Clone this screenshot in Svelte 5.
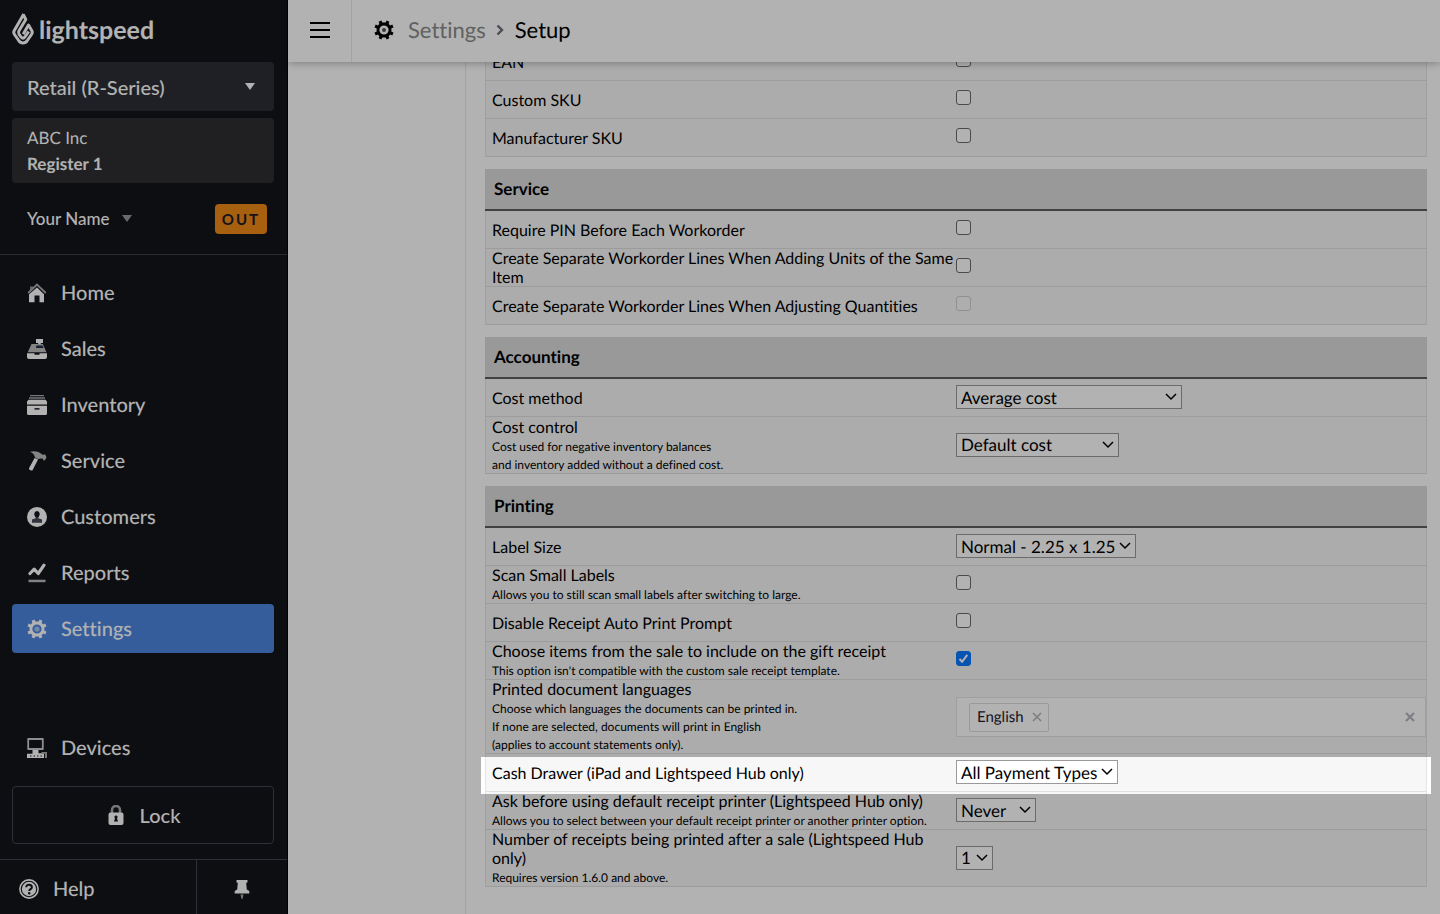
<script>
  const nav = ['Home', 'Sales', 'Inventory', 'Service', 'Customers', 'Reports', 'Settings'];

  const sections = [
    {
      title: '',
      rows: [
        { id: 'ean', label: 'EAN', type: 'check' },
        { id: 'custom-sku', label: 'Custom SKU', type: 'check' },
        { id: 'manufacturer-sku', label: 'Manufacturer SKU', type: 'check' }
      ]
    },
    {
      title: 'Service',
      rows: [
        { id: 'require-pin', label: 'Require PIN Before Each Workorder', type: 'check' },
        { id: 'lines-units', label: 'Create Separate Workorder Lines When Adding Units of the Same Item', type: 'check' },
        { id: 'lines-quantities', label: 'Create Separate Workorder Lines When Adjusting Quantities', type: 'check', disabled: true }
      ]
    },
    {
      title: 'Accounting',
      rows: [
        { id: 'cost-method', label: 'Cost method', type: 'select', value: 'Average cost', width: 226 },
        {
          id: 'cost-control',
          label: 'Cost control',
          notes: ['Cost used for negative inventory balances', 'and inventory added without a defined cost.'],
          type: 'select',
          value: 'Default cost',
          width: 163,
          tall: true
        }
      ]
    },
    {
      title: 'Printing',
      rows: [
        { id: 'label-size', label: 'Label Size', type: 'select', value: 'Normal - 2.25 x 1.25', width: 180 },
        { id: 'scan-small', label: 'Scan Small Labels', notes: ['Allows you to still scan small labels after switching to large.'], type: 'check' },
        { id: 'disable-prompt', label: 'Disable Receipt Auto Print Prompt', type: 'check' },
        {
          id: 'gift-receipt',
          label: 'Choose items from the sale to include on the gift receipt',
          notes: ["This option isn't compatible with the custom sale receipt template."],
          type: 'check',
          checked: true
        },
        {
          id: 'languages',
          label: 'Printed document languages',
          notes: [
            'Choose which languages the documents can be printed in.',
            'If none are selected, documents will print in English',
            '(applies to account statements only).'
          ],
          type: 'tags',
          value: 'English'
        },
        { id: 'cash-drawer', label: 'Cash Drawer (iPad and Lightspeed Hub only)', type: 'select', value: 'All Payment Types', width: 162, spotlight: true },
        {
          id: 'ask-printer',
          label: 'Ask before using default receipt printer (Lightspeed Hub only)',
          notes: ['Allows you to select between your default receipt printer or another printer option.'],
          type: 'select',
          value: 'Never',
          width: 80
        },
        {
          id: 'receipt-count',
          label: 'Number of receipts being printed after a sale (Lightspeed Hub only)',
          notes: ['Requires version 1.6.0 and above.'],
          type: 'select',
          value: '1',
          width: 37
        }
      ]
    }
  ];
</script>

{#snippet gear()}
  <path
    fill="currentColor"
    fill-rule="evenodd"
    d="M8.3 2.6 7.4.5 4.6 1.7l.8 2.1-1.6 1.6-2.1-.8L.5 7.4l2.1.9v3.4l-2.1.9 1.2 2.8 2.1-.8 1.6 1.6-.8 2.1 2.8 1.2.9-2.1h3.4l.9 2.1 2.8-1.2-.8-2.1 1.6-1.6 2.1.8 1.2-2.8-2.1-.9V8.3l2.1-.9-1.2-2.8-2.1.8-1.6-1.6.8-2.1L12.6.5l-.9 2.1zM10 5.400a4.600 4.600 0 1 0 0 9.200a4.600 4.600 0 1 0 0-9.200z"
  />
{/snippet}

{#snippet icon(name)}
  <svg class="icon" viewBox="0 0 20 20" aria-hidden="true">
    {#if name === 'Home'}
      <path d="M3 3.500h3v2L3 8z" fill="#999" />
      <path d="M1.200 10 10 1.500l8.800 8.500" fill="none" stroke="#aaa" stroke-width="1.800" />
      <path d="M10 4.600 17 11.300V19.300h-4.500V12.500h-5v6.800H2V11.300z" fill="currentColor" />
    {:else if name === 'Sales'}
      <path d="M9 0h7v4h-2.200v2h-2.600V4H9z" fill="currentColor" />
      <path d="M4.500 5h11.300l3.600 8.300H.8z" fill="#bdbdbd" />
      <path d="M9.500 6.500h6l1 2.500H9z" fill="#1d2b45" />
      <path d="M0 14.300h7.500v1.500h5v-1.500H20V18a2 2 0 0 1-2 2H2a2 2 0 0 1-2-2z" fill="currentColor" />
    {:else if name === 'Inventory'}
      <path d="M3 0h14v1.300H3zM2 2.300h16v1.500H2z" fill="#aaa" />
      <path d="M1.500 4.800h17L20 6.500V9.500H0V6.500zM0 10.700h20V18.500a1.500 1.500 0 0 1-1.500 1.500h-17A1.500 1.500 0 0 1 0 18.500z" fill="currentColor" />
      <path d="M7.500 13h5v1.700h-5z" fill="#333745" />
    {:else if name === 'Service'}
      <path d="M3 .8C7-.3 11.200-.2 14.500 2.900c.6.6 1.200 1 2 .8l1.500-.4 1.500 2.900-1.700 3.200-1.500-.2-.3-1.500-2.200-.3c-1.600.8-3.500.6-5.300-.4L7.500 5.300C7.500 3.300 5.500 2.200 3 .8z" fill="#bdbdbd" />
      <path d="m7.600 7 3.400 1.600-5.200 10.100c-1 1.900-4.500.4-3.700-1.700z" fill="currentColor" />
    {:else if name === 'Customers'}
      <circle cx="10" cy="10" r="10" fill="currentColor" />
      <path d="M10 4.300c3.300 0 2.900 4.400 1.300 5.900v1L15 12.500v3.300H5v-3.300l3.700-1.300v-1C7.100 8.700 6.700 4.300 10 4.300z" fill="#454858" />
      <path d="M10 4.300c3.300 0 2.900 4.400 1.300 5.900H8.700C7.100 8.700 6.700 4.300 10 4.300z" fill="#15171f" />
    {:else if name === 'Reports'}
      <path d="M3 10.500 7.200 6.200l4 4.300L17 2.200" fill="none" stroke="currentColor" stroke-width="3.200" stroke-linecap="round" stroke-linejoin="round" />
      <path d="M1.500 16.700h17v2.500h-17z" fill="#bbb" />
    {:else if name === 'Settings'}
      {@render gear()}
      <circle cx="10" cy="10" r="2.600" fill="#a9c4f5" />
    {:else if name === 'Devices'}
      <path d="M1.200 1h14.600v10H1.200z" fill="none" stroke="#ccc" stroke-width="1.800" stroke-linejoin="round" />
      <path d="M5.500 12h6v3.200H17V20H0v-4.300h5.500z" fill="currentColor" />
      <path d="M3 17.500h1.500v1H3zm3.500 0H8v1H6.500zm3.500 0h1.500v1H10zm3.500 0H15v1h-1.500z" fill="#222" />
      <path d="M14.500 14H20v6h-2v-4.300h-3.500z" fill="#aaa" />
    {:else if name === 'Lock'}
      <path d="M6 9V5a4 4 0 0 1 8 0v4" fill="none" stroke="#aaa" stroke-width="2.600" />
      <path d="M4.500 7.500h11a2 2 0 0 1 2 2V18a2 2 0 0 1-2 2h-11a2 2 0 0 1-2-2V9.500a2 2 0 0 1 2-2z" fill="currentColor" />
      <path d="M10 10.500a1.500 1.500 0 0 1 1 2.700l1 3.300H8l1-3.300a1.500 1.500 0 0 1 1-2.700z" fill="#15171f" />
    {:else if name === 'Help'}
      <circle cx="10" cy="10" r="9.100" fill="none" stroke="currentColor" stroke-width="1.600" />
      <circle cx="10" cy="10" r="7.200" fill="currentColor" />
      <path d="M7.200 8.200c0-3.400 5.700-3.200 5.700 0 0 2-2.700 1.900-2.700 3.900" fill="none" stroke="#15171f" stroke-width="2" />
      <circle cx="10.200" cy="14.200" r="1.200" fill="#15171f" />
    {:else if name === 'Pin'}
      <path d="M4.500 1h11v2.200l-1.300.8.6 6.500 2.500 1.500v2.500H2.700V12l2.500-1.500.6-6.500-1.300-.8z" fill="currentColor" />
      <path d="M8.500 15.500h3L10.500 20h-1z" fill="#aaa" />
    {/if}
  </svg>
{/snippet}

<div class="app">
  <aside class="sidebar">
    <div class="logo">
      <svg class="flame" viewBox="0 0 22 33" aria-hidden="true">
        <g fill="none" stroke="currentColor" stroke-width="3" stroke-linejoin="round">
          <path d="M11.800 1 2.300 17.500q-1.200 2 .2 4l4.200 6q1.500 2.500 4.300 2.500t4.300-2.500l4.200-6q1.400-2 .2-4L16.500 12l-5.300 9.300" />
          <path d="M11.200 1.500 13.800 6.500 7 17.800q-1 1.700 0 3.300l2 2.900q2 2.300 3.900 0l3.800-5.500" />
        </g>
      </svg>
      <span>lightspeed</span>
    </div>

    <button class="product">Retail (R-Series)<span class="caret"></span></button>
    <div class="register"><span>ABC Inc</span><strong>Register 1</strong></div>
    <div class="user">
      <button class="name">Your Name<span class="caret dim"></span></button>
      <button class="out">OUT</button>
    </div>

    <nav>
      {#each nav as item}
        <a href="#{item.toLowerCase()}" class="link" class:active={item === 'Settings'}>{@render icon(item)}{item}</a>
      {/each}
    </nav>

    <div class="lower">
      <a href="#devices" class="link">{@render icon('Devices')}Devices</a>
      <button class="lock">{@render icon('Lock')}Lock</button>
    </div>
    <div class="foot">
      <a href="#help" class="help">{@render icon('Help')}Help</a>
      <button class="pin" aria-label="Pin menu">{@render icon('Pin')}</button>
    </div>
  </aside>

  <main>
    <header>
      <button class="burger" aria-label="Menu"><i></i><i></i><i></i></button>
      <div class="crumbs">
        <svg class="icon" viewBox="0 0 20 20" aria-hidden="true">
          {@render gear()}
          <circle cx="10" cy="10" r="2" fill="#555" />
        </svg>
        <a href="#settings">Settings</a>
        <svg class="sep" viewBox="0 0 8 12" aria-hidden="true"><path d="m1.500 1.500 4.500 4.500-4.500 4.500" fill="none" stroke="#6d6f7a" stroke-width="2.400" /></svg>
        <span>Setup</span>
      </div>
    </header>

    <div class="body">
      <div class="gutter"></div>
      <form class="content">
        {#each sections as section}
          <section>
            {#if section.title}<h2>{section.title}</h2>{/if}
            <div class="rows">
              {#each section.rows as row}
                <div class="row" class:tall={row.tall} class:spotlight={row.spotlight}>
                  <div class="text">
                    <label for={row.id}>{row.label}</label>
                    {#each row.notes ?? [] as note}<small>{note}</small>{/each}
                  </div>
                  <div class="control">
                    {#if row.type === 'check'}
                      <input id={row.id} type="checkbox" checked={row.checked} disabled={row.disabled} />
                    {:else if row.type === 'select'}
                      <select id={row.id} style:width="{row.width}px"><option>{row.value}</option></select>
                    {:else}
                      <div class="tags">
                        <span class="tag">
                          {row.value}
                          <button type="button" class="x" aria-label="Remove English">
                            <svg viewBox="0 0 10 10" aria-hidden="true"><path d="m1 1 8 8M9 1 1 9" /></svg>
                          </button>
                        </span>
                        <input id={row.id} type="text" />
                        <button type="button" class="x heavy" aria-label="Clear all">
                          <svg viewBox="0 0 10 10" aria-hidden="true"><path d="m1 1 8 8M9 1 1 9" /></svg>
                        </button>
                      </div>
                    {/if}
                  </div>
                </div>
              {/each}
            </div>
          </section>
        {/each}
      </form>
    </div>
  </main>
</div>

<style>
  :global(body) {
    margin: 0;
    overflow-x: hidden;
  }
  .app,
  .app * {
    box-sizing: border-box;
  }
  .app {
    display: flex;
    min-height: 100vh;
    background: #fff;
    color: #000;
    font-family: Lato, 'Liberation Sans', sans-serif;
    font-size: 16px;
    font-variant-ligatures: none;
    text-rendering: geometricPrecision;
  }
  button {
    padding: 0;
    border: 0;
    background: none;
    color: inherit;
    font: inherit;
    cursor: pointer;
  }
  a {
    color: inherit;
    text-decoration: none;
  }
  .icon {
    flex: none;
    width: 20px;
    height: 20px;
  }

  .sidebar {
    flex: none;
    display: flex;
    flex-direction: column;
    width: 288px;
    border-right: 1px solid #000;
    background: #13151a;
    color: #fff;
    font-size: 20px;
  }
  .logo {
    display: flex;
    align-items: center;
    gap: 5px;
    height: 62px;
    padding: 0 12px 3px;
    font-size: 25px;
    font-weight: 700;
    line-height: 32px;
  }
  .flame {
    width: 22px;
    height: 33px;
  }
  .product {
    display: flex;
    align-items: center;
    justify-content: space-between;
    height: 49px;
    margin: 0 13px 7px 12px;
    padding: 0 19px 0 15px;
    border-radius: 4px;
    background: #2c2f35;
    font-weight: 500;
  }
  .caret {
    border: 5px solid transparent;
    border-top: 7px solid currentColor;
    border-bottom: 0;
  }
  .caret.dim {
    color: #999;
  }
  .register {
    display: flex;
    flex-direction: column;
    justify-content: center;
    height: 65px;
    margin: 0 13px 0 12px;
    padding: 0 15px;
    border-radius: 4px;
    background: #2e2e31;
    font-size: 17px;
    line-height: 26px;
  }
  .user {
    display: flex;
    align-items: center;
    justify-content: space-between;
    height: 72px;
    padding: 0 20px 0 27px;
    border-bottom: 1px solid #3d3f48;
    font-size: 17px;
    font-weight: 500;
  }
  .name {
    display: flex;
    align-items: center;
    gap: 12px;
  }
  .out {
    width: 52px;
    height: 30px;
    border-radius: 4px;
    background: #f08818;
    color: #1c1c24;
    font-size: 15px;
    font-weight: 700;
    letter-spacing: 2px;
  }
  nav {
    display: flex;
    flex-direction: column;
    gap: 7px;
    padding: 13px 13px 0 12px;
  }
  .link {
    display: flex;
    align-items: center;
    gap: 14px;
    height: 49px;
    padding: 0 15px;
    border-radius: 4px;
    font-weight: 500;
  }
  .active {
    background: #4e86df;
  }
  .lower {
    display: flex;
    flex-direction: column;
    gap: 14px;
    margin-top: auto;
    padding: 0 13px 15px 12px;
  }
  .lock {
    display: flex;
    align-items: center;
    justify-content: center;
    gap: 14px;
    height: 58px;
    border: 1px solid #42444f;
    border-radius: 4px;
    font-weight: 500;
  }
  .foot {
    display: flex;
    height: 55px;
    border-top: 1px solid #42444f;
    font-weight: 500;
  }
  .help {
    display: flex;
    align-items: center;
    gap: 14px;
    width: 196px;
    padding: 4px 19px 0;
  }
  .pin {
    flex: 1;
    display: flex;
    align-items: center;
    justify-content: center;
    padding-top: 4px;
    border-left: 1px solid #42444f;
  }

  main {
    flex: 1;
    display: flex;
    flex-direction: column;
    min-width: 0;
  }
  header {
    position: sticky;
    top: 0;
    z-index: 1;
    display: flex;
    height: 62px;
    background: #fff;
    box-shadow: 0 1px 8px rgba(0, 0, 0, 0.3);
  }
  .burger {
    display: flex;
    flex-direction: column;
    align-items: center;
    justify-content: center;
    gap: 5px;
    width: 64px;
    padding-bottom: 2px;
    border-right: 1px solid #e8e8e8;
  }
  .burger i {
    width: 20px;
    height: 2px;
    background: #000;
  }
  .crumbs {
    display: flex;
    align-items: center;
    padding: 0 0 3px 22px;
    font-size: 22px;
  }
  .crumbs a {
    margin: 0 10px 0 14px;
    color: #8c8c8c;
  }
  .sep {
    width: 8px;
    height: 12px;
    margin-right: 11px;
  }

  .body {
    flex: 1;
    display: flex;
    margin-top: -19px;
  }
  .gutter {
    flex: none;
    width: 178px;
    border-right: 1px solid #e8e8e8;
  }
  .content {
    flex: 1;
    min-width: 0;
    padding: 0 13px 27px 19px;
  }
  section + section {
    margin-top: 12px;
  }
  h2 {
    height: 42px;
    margin: 0;
    padding: 0 9px;
    border-bottom: 2px solid #5c5e60;
    background: #dbdbdb;
    font-size: 17px;
    line-height: 40px;
  }
  .rows {
    border: solid #e6e6e6;
    border-width: 0 1px;
  }
  .row {
    position: relative;
    display: grid;
    grid-template-columns: 1fr 1fr;
    align-items: center;
    min-height: 38px;
    background: #f7f7f7;
    box-shadow: inset 0 -1px #e0e0e0;
  }
  .row.tall {
    min-height: 57px;
  }
  /* Dims the whole page except for the band around this row. */
  .spotlight::after {
    content: '';
    position: absolute;
    z-index: 2;
    inset: 3px -5px -2px;
    box-shadow: 0 0 0 3000px rgba(0, 0, 0, 0.3);
    pointer-events: none;
  }
  .text {
    padding-left: 6px;
  }
  label,
  small {
    display: block;
  }
  label {
    line-height: 19px;
  }
  small {
    font-size: 12px;
    line-height: 18px;
  }
  label + small {
    margin-top: 1px;
  }
  .control {
    display: flex;
  }
  input[type='checkbox'] {
    appearance: none;
    width: 15px;
    height: 15px;
    margin: 0 0 6px;
    border: 1px solid #6b6b6b;
    border-radius: 3px;
    background: #fff;
  }
  input[type='checkbox']:disabled {
    border-color: #cfcfcf;
    background: #f9f9f9;
  }
  input[type='checkbox']:checked {
    border-color: #0b78ff;
    background: #0b78ff
      url("data:image/svg+xml,%3Csvg xmlns='http://www.w3.org/2000/svg' viewBox='0 0 13 13'%3E%3Cpath d='m2.500 7 2.600 2.800 5.200-7' fill='none' stroke='white' stroke-width='2'/%3E%3C/svg%3E")
      center / 13px no-repeat;
  }
  select {
    appearance: none;
    height: 24px;
    margin: 0 0 2px;
    padding: 0 0 0 4px;
    border: 1px solid #9a9a9a;
    border-radius: 0;
    background: #fff
      url("data:image/svg+xml,%3Csvg xmlns='http://www.w3.org/2000/svg' viewBox='0 0 12 8'%3E%3Cpath d='m1 1 5 5 5-5' fill='none' stroke='black' stroke-width='1.500'/%3E%3C/svg%3E")
      right 4px center / 12px 8px no-repeat;
    color: #000;
    font: 17px Lato, 'Liberation Sans', sans-serif;
    text-rendering: inherit;
  }
  .tags {
    flex: 1;
    display: flex;
    align-items: center;
    height: 40px;
    padding: 0 10px 0 12px;
    border: 1px solid #e4e4e4;
    background: #fff;
  }
  .tags input {
    flex: 1;
    min-width: 0;
    border: 0;
    outline: 0;
    background: none;
  }
  .tag {
    display: flex;
    align-items: center;
    gap: 8px;
    height: 29px;
    padding: 0 6px 0 7px;
    border: 1px solid #dcdcdc;
    border-radius: 2px;
    color: #1c2030;
    font-size: 15px;
  }
  .x {
    display: flex;
  }
  .x svg {
    width: 10px;
    height: 10px;
    fill: none;
    stroke: #b0b3b8;
    stroke-width: 1.500;
  }
  .x.heavy svg {
    stroke-width: 2;
  }
</style>
